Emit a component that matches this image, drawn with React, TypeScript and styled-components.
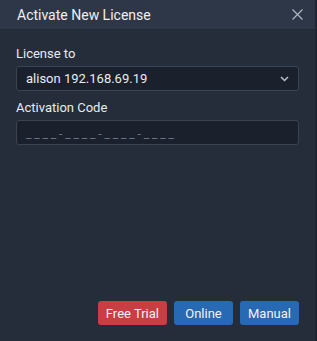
import { createGlobalStyle } from "styled-components";
import styled from "styled-components";

const GlobalStyle = createGlobalStyle`
  html, body {
    margin: 0;
    padding: 0;
    background: #252d3b;
  }
  * {
    box-sizing: border-box;
  }
`;

const Dialog = styled.div`
  width: 317px;
  height: 341px;
  display: flex;
  flex-direction: column;
  background: #252d3b;
  font-family: Roboto, "Noto Sans", sans-serif;
  color: #e6e9ee;
  border-right: 2px solid #1f2633;
`;

const Header = styled.div`
  height: 30px;
  display: flex;
  align-items: center;
  justify-content: space-between;
  padding: 0 12px 0 17px;
  background: #2e3747;
  border-bottom: 1px solid #222a37;
`;

const Title = styled.h1`
  margin: 0;
  font-size: 14px;
  font-weight: 400;
  color: #eef0f3;
`;

const CloseButton = styled.button`
  border: 0;
  background: none;
  padding: 0;
  width: 11px;
  height: 11px;
  display: flex;
  cursor: pointer;
  svg {
    width: 11px;
    height: 11px;
  }
`;

const Body = styled.div`
  flex: 1;
  display: flex;
  flex-direction: column;
  padding: 15px 16px 0 16px;
`;

const Label = styled.label`
  font-size: 13px;
  line-height: 18px;
  color: #e8ebef;
  margin-bottom: 3px;
`;

const Field = styled.div`
  height: 25px;
  border: 1px solid #3a4352;
  border-radius: 3px;
  background: #1b212c;
  display: flex;
  align-items: center;
  justify-content: space-between;
  padding: 0 9px 0 9px;
  margin-bottom: 8px;
  font-size: 13px;
  color: #e8ebef;
`;

const Placeholder = styled.span`
  font-size: 12px;
  letter-spacing: 2.85px;
  color: #6b7380;
  padding-top: 3px;
`;

const Footer = styled.div`
  display: flex;
  justify-content: flex-end;
  gap: 7px;
  padding: 0 16px 16px 0;
`;

const Button = styled.button<{ $variant?: "danger" | "primary" }>`
  height: 24px;
  min-width: 59px;
  padding: 0 8px;
  border: 0;
  border-radius: 3px;
  font-family: inherit;
  font-size: 13px;
  color: #f0f3f7;
  background: ${({ $variant }) => ($variant === "danger" ? "#c93e42" : "#2769b3")};
  cursor: pointer;
`;

export default function App() {
  return (
    <>
      <GlobalStyle />
      <Dialog>
        <Header>
          <Title>Activate New License</Title>
          <CloseButton aria-label="close">
            <svg viewBox="0 0 11 11" fill="none" stroke="#aeb5c0" strokeWidth="1.2">
              <path d="M0.5 0.5l10 10M10.5 0.5l-10 10" />
            </svg>
          </CloseButton>
        </Header>
        <Body>
          <Label>License to</Label>
          <Field>
            <span>alison 192.168.69.19</span>
            <svg width="9" height="6" viewBox="0 0 9 6" fill="none" stroke="#b9c0ca" strokeWidth="1.5">
              <path d="M1 1l3.5 3.5L8 1" />
            </svg>
          </Field>
          <Label>Activation Code</Label>
          <Field>
            <Placeholder>____-____-____-____</Placeholder>
          </Field>
        </Body>
        <Footer>
          <Button $variant="danger">Free Trial</Button>
          <Button $variant="primary">Online</Button>
          <Button $variant="primary">Manual</Button>
        </Footer>
      </Dialog>
    </>
  );
}
